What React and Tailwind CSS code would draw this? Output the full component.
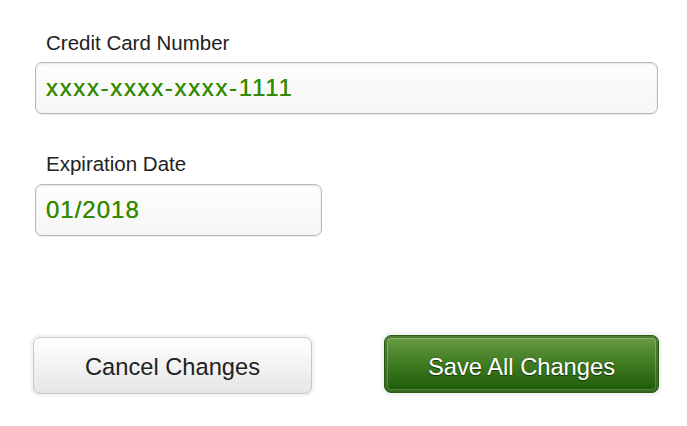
import React from "react";

export default function App() {
  return (
    <div
      className="w-[687px] h-[426px] bg-white pl-[35px] pt-[31px] flex flex-col"
      style={{ fontFamily: '"Liberation Sans", Arial, sans-serif' }}
    >
      <label className="block pl-[11px] text-[20.5px] leading-[24px] text-[#222]">
        Credit Card Number
      </label>
      <div className="mt-[7px] h-[52px] w-[623px] rounded-[7px] border border-[#b8b8b8] bg-gradient-to-b from-[#fdfdfd] to-[#f6f6f6] shadow-[inset_0_1px_2px_rgba(0,0,0,0.1),0_1px_0_#ececec] flex items-center pl-[10px] text-[24px] tracking-[1.65px] text-[#318a00] [text-shadow:0_0_0.4px_#318a00]">
        xxxx-xxxx-xxxx-1111
      </div>

      <label className="block mt-[38px] pl-[11px] text-[20.5px] leading-[24px] text-[#222]">
        Expiration Date
      </label>
      <div className="mt-[8px] h-[52px] w-[287px] rounded-[7px] border border-[#b8b8b8] bg-gradient-to-b from-[#fdfdfd] to-[#f6f6f6] shadow-[inset_0_1px_2px_rgba(0,0,0,0.1),0_1px_0_#ececec] flex items-center pl-[10px] text-[24px] tracking-[1px] text-[#318a00] [text-shadow:0_0_0.4px_#318a00]">
        01/2018
      </div>

      <div className="mt-[99px] -ml-[2px] w-[626px] flex justify-between items-start">
        <button className="mt-[2px] h-[57px] w-[279px] rounded-[7px] border border-[#c6c6c6] bg-gradient-to-b from-white to-[#e6e6e6] shadow-[0_0_0_3px_#f5f5f5,0_1px_1px_rgba(0,0,0,0.08)] pt-[4px] text-[23.7px] text-[#222] flex items-center justify-center">
          Cancel Changes
        </button>
        <button className="h-[58px] w-[275px] rounded-[7px] border border-[#2a5a12] bg-gradient-to-b from-[#6a9c46] via-[#3e7b20] to-[#1c5908] shadow-[0_0_0_3px_#f4f4f4,inset_0_0_0_2px_rgba(40,90,15,0.6),inset_0_0_0_3px_rgba(255,255,255,0.22)] pt-[7px] text-[23.7px] text-white [text-shadow:0_1px_1px_#0f3702,0_0_1px_#0f3702,0_0_0.5px_#fff] flex items-center justify-center">
          Save All Changes
        </button>
      </div>
    </div>
  );
}
